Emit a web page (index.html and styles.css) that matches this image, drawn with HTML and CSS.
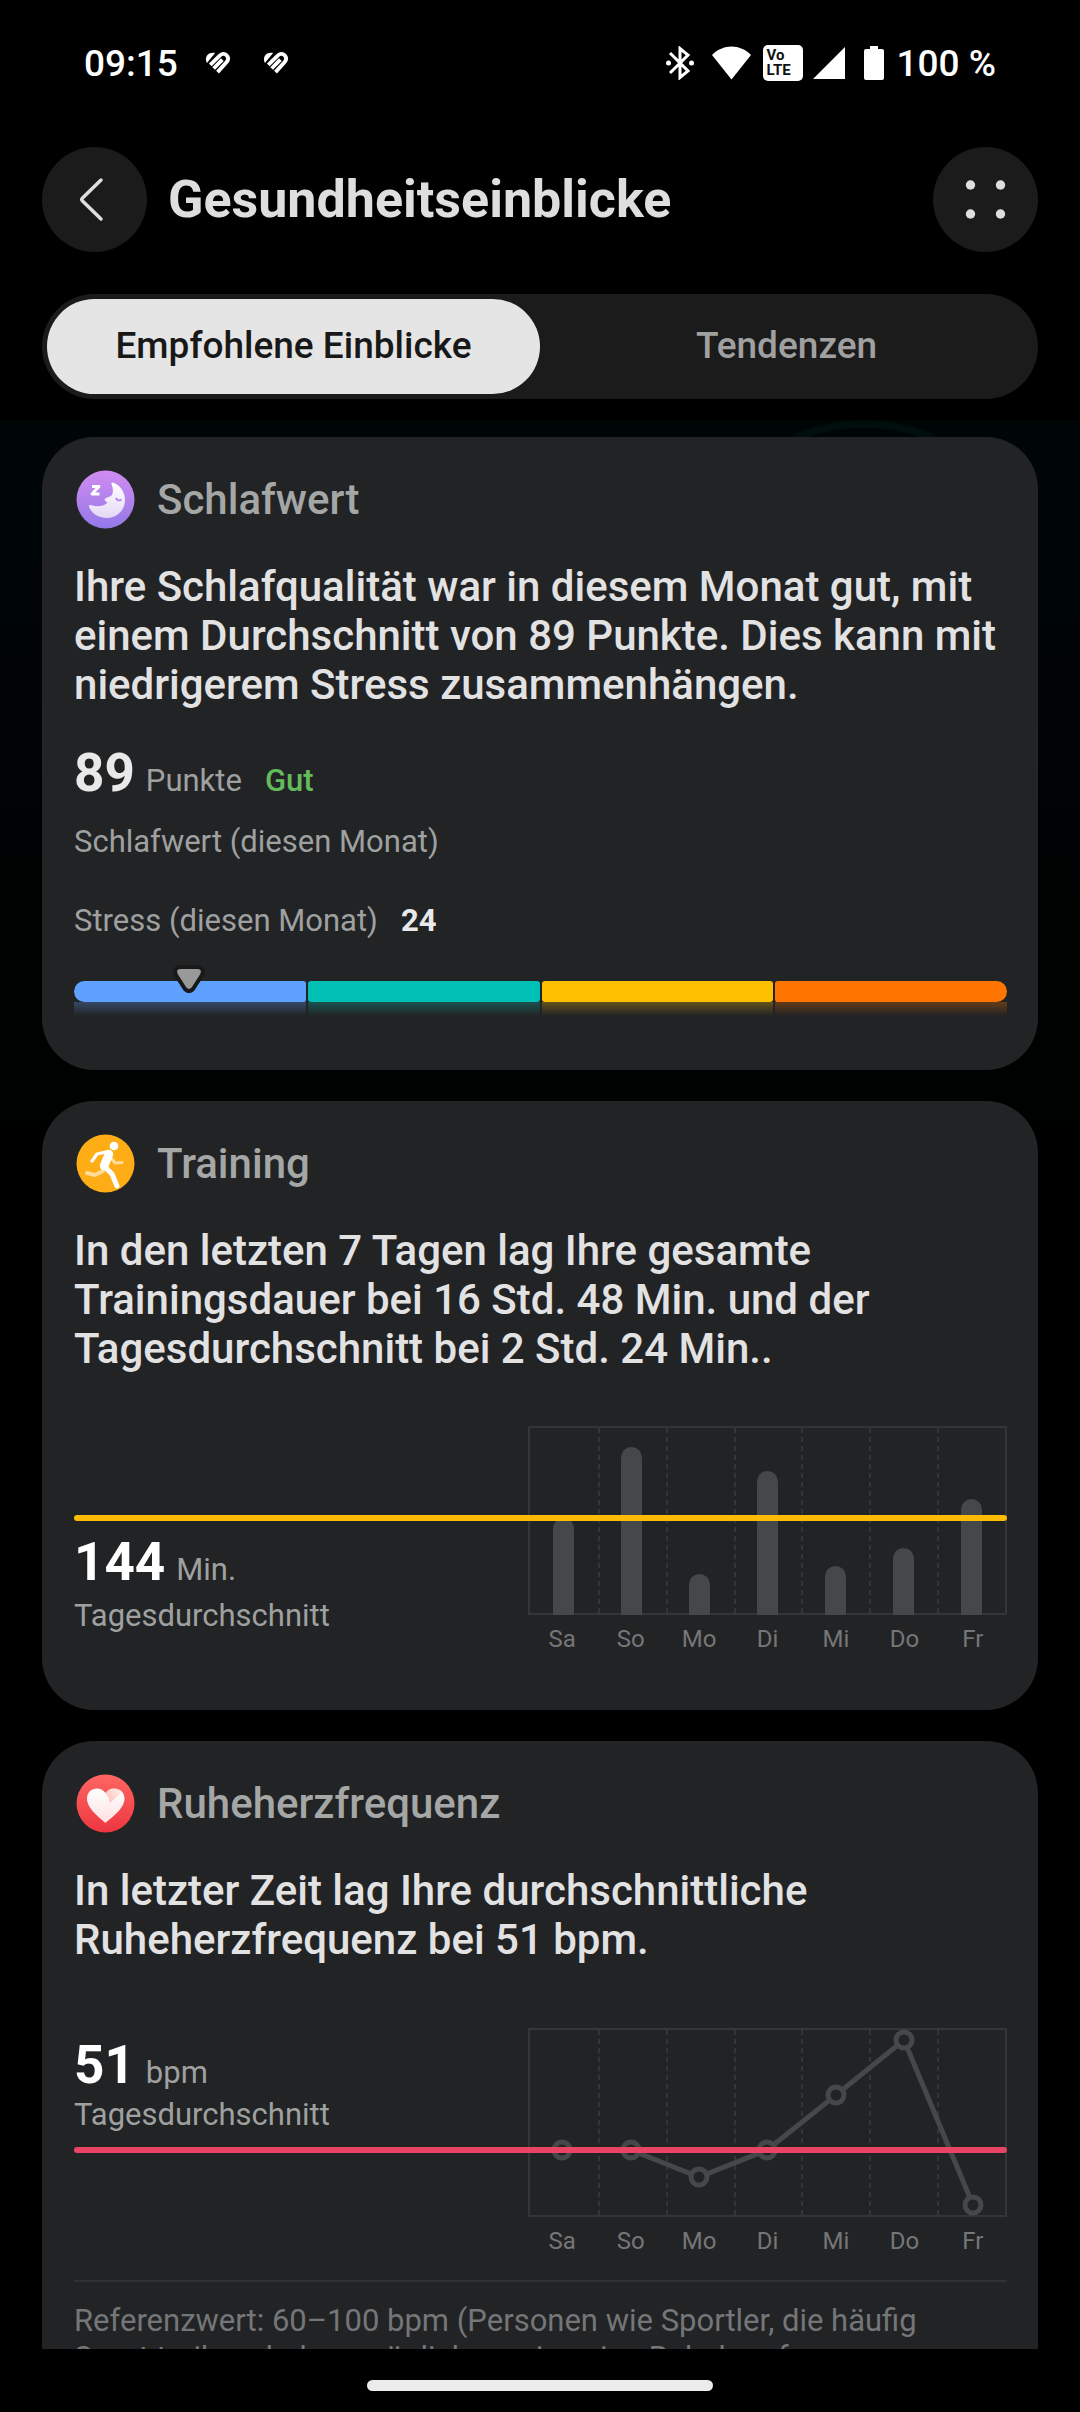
FILE: index.html
```html
<!DOCTYPE html>
<html lang="de">
<head>
<meta charset="utf-8">
<meta name="viewport" content="width=device-width, initial-scale=1">
<title>Gesundheitseinblicke</title>
<link rel="stylesheet" href="styles.css">
</head>
<body>
<div class="status-bar">
  <div class="status-left">
    <span class="clock">09:15</span>
    <svg class="band" viewBox="0 0 27 24" aria-hidden="true"><path d="M2 12 C-1 6 3 0 10.500 1.500 Z" fill="#fff"/><path d="M5.500 14 L15 4.500 C17.500 2 20.500 2 22.500 4 C24.500 6 24.500 8.500 22.500 11 L13 21.500 M9 17.700 L18 8.500" fill="none" stroke="#fff" stroke-width="4"/></svg>
    <svg class="band" viewBox="0 0 27 24" aria-hidden="true"><path d="M2 12 C-1 6 3 0 10.500 1.500 Z" fill="#fff"/><path d="M5.500 14 L15 4.500 C17.500 2 20.500 2 22.500 4 C24.500 6 24.500 8.500 22.500 11 L13 21.500 M9 17.700 L18 8.500" fill="none" stroke="#fff" stroke-width="4"/></svg>
  </div>
  <div class="status-right">
    <svg class="bluetooth" viewBox="0 0 28 34" aria-hidden="true"><path d="M4 7 L22 25 L14 31.500 V2.500 L22 9 L4 27" fill="none" stroke="#fff" stroke-width="3"/><circle cx="2.500" cy="17" r="2.500" fill="#fff"/><circle cx="25.500" cy="17" r="2.500" fill="#fff"/></svg>
    <svg class="wifi" viewBox="0 0 39 34" aria-hidden="true"><path d="M0 9 C11 -2.500 28 -2.500 39 9 L19.500 33.500 Z" fill="#fff"/></svg>
    <span class="volte">Vo<br>LTE</span>
    <svg class="signal" viewBox="0 0 32 32" aria-hidden="true"><path d="M32 0 V32 H0 Z" fill="#fff"/></svg>
    <svg class="battery" viewBox="0 0 20 34" aria-hidden="true"><path d="M6 0 H14 V3 H18 Q20 3 20 5 V32 Q20 34 18 34 H2 Q0 34 0 32 V5 Q0 3 2 3 H6 Z" fill="#fff"/></svg>
    <span class="charge">100 %</span>
  </div>
</div>

<header class="app-bar">
  <button class="round" type="button" aria-label="Zurück"><svg viewBox="0 0 105 105" aria-hidden="true"><path d="M59 33 L40.500 51 Q39 52.500 40.500 54 L59 72" fill="none" stroke="#dedede" stroke-width="3.500" stroke-linecap="round"/></svg></button>
  <h1 class="title">Gesundheitseinblicke</h1>
  <button class="round" type="button" aria-label="Mehr"><svg viewBox="0 0 105 105" aria-hidden="true"><g fill="#dedede"><circle cx="37.500" cy="38" r="4.700"/><circle cx="67.500" cy="38" r="4.700"/><circle cx="37.500" cy="67" r="4.700"/><circle cx="67.500" cy="67" r="4.700"/></g></svg></button>
</header>

<nav class="tabs">
  <button class="tab tab-active" type="button">Empfohlene Einblicke</button>
  <button class="tab" type="button">Tendenzen</button>
</nav>

<main class="feed">
  <section class="card">
    <div class="card-head">
      <svg class="badge" viewBox="0 0 63 63" aria-hidden="true">
        <defs>
          <linearGradient id="sleep" x1="0" y1="0" x2="0" y2="1"><stop offset="0" stop-color="#d08cf0"/><stop offset="1" stop-color="#9478e8"/></linearGradient>
          <linearGradient id="moon" x1="0" y1="0" x2="0" y2="1"><stop offset="0" stop-color="#fff"/><stop offset="1" stop-color="#e4d8f6"/></linearGradient>
        </defs>
        <circle cx="31.500" cy="31.500" r="29" fill="url(#sleep)"/>
        <path d="M38.500 14.500 C46 16.500 51 24 51 32 C51 42 43 50 33 50 C25 50 17.500 46 15 38.500 Q14.500 36.500 17 37 C23 39 29 38.500 32.500 35.500 Q34 34.500 31 32.500 Q29.500 31.500 32 30 L37 28 C40 25 39 20 37.500 16 Q37 14 38.500 14.500 Z" fill="url(#moon)"/>
        <path d="M42 30 Q44 34 47.500 31.500" fill="none" stroke="#b183ec" stroke-width="1.800"/>
        <path d="M18 18.500 H25 L18 26 H25.500" fill="none" stroke="#fff" stroke-width="2.800" stroke-linejoin="round"/>
      </svg>
      <h2 class="card-title">Schlafwert</h2>
    </div>
    <p class="insight">Ihre Schlafqualität war in diesem Monat gut, mit einem Durchschnitt von 89 Punkte. Dies kann mit niedrigerem Stress zusammenhängen.</p>
    <p class="score"><span class="value soft">89</span><span class="unit">Punkte</span><span class="rating">Gut</span></p>
    <p class="caption">Schlafwert (diesen Monat)</p>
    <p class="caption stress">Stress (diesen Monat)<strong class="stress-value">24</strong></p>
    <div class="scale">
      <span class="zone blue"></span><span class="zone teal"></span><span class="zone yellow"></span><span class="zone orange"></span>
      <svg class="marker" viewBox="0 0 32 28" aria-hidden="true"><path d="M7 2 H25 Q32 3 29 10 L20 24 Q16 28 12 24 L3 10 Q0 3 7 2 Z" fill="#999" stroke="#19191a" stroke-width="4"/></svg>
    </div>
  </section>

  <section class="card">
    <div class="card-head">
      <svg class="badge" viewBox="0 0 63 63" aria-hidden="true">
        <circle cx="31.500" cy="31.500" r="29" fill="#ffad17"/>
        <g fill="none" stroke-linecap="round" stroke-linejoin="round">
          <path d="M29 39 L21 43 L13 41" stroke="#ffdb98" stroke-width="4"/>
          <path d="M38 27 L41 31 L48 30.500" stroke="#ffdb98" stroke-width="3.200"/>
          <path d="M32 20 L23 22 L18 29" stroke="#fff" stroke-width="3.200"/>
          <path d="M35 22 L30 34" stroke="#fff" stroke-width="8.500"/>
          <path d="M31 35 L38 42 L43 54" stroke="#fff" stroke-width="5"/>
        </g>
        <circle cx="40" cy="14" r="4.300" fill="#fff"/>
      </svg>
      <h2 class="card-title">Training</h2>
    </div>
    <p class="insight">In den letzten 7 Tagen lag Ihre gesamte Trainingsdauer bei 16 Std. 48 Min. und der Tagesdurchschnitt bei 2 Std. 24 Min..</p>
    <div class="trend">
      <div class="summary below">
        <p class="score-line"><span class="value">144</span><span class="unit">Min.</span></p>
        <p class="caption">Tagesdurchschnitt</p>
      </div>
      <div class="plot bars">
        <div class="slot"><span class="bar" style="height:97px"></span></div>
        <div class="slot"><span class="bar" style="height:168px"></span></div>
        <div class="slot"><span class="bar" style="height:41px"></span></div>
        <div class="slot"><span class="bar" style="height:144px"></span></div>
        <div class="slot"><span class="bar" style="height:49px"></span></div>
        <div class="slot"><span class="bar" style="height:67px"></span></div>
        <div class="slot"><span class="bar" style="height:116px"></span></div>
      </div>
      <div class="days"><span>Sa</span><span>So</span><span>Mo</span><span>Di</span><span>Mi</span><span>Do</span><span>Fr</span></div>
      <div class="average amber" style="margin-top:89px"></div>
    </div>
  </section>

  <section class="card">
    <div class="card-head">
      <svg class="badge" viewBox="0 0 63 63" aria-hidden="true">
        <defs>
          <linearGradient id="pulse" x1="0" y1="0" x2="0" y2="1"><stop offset="0" stop-color="#ff6662"/><stop offset="1" stop-color="#ec3740"/></linearGradient>
          <linearGradient id="heart" x1="0" y1="0" x2="0" y2="1"><stop offset="0" stop-color="#fff"/><stop offset="1" stop-color="#fde0e2"/></linearGradient>
          <linearGradient id="lobe" x1="1" y1="0.300" x2="0" y2="0.700"><stop offset="0" stop-color="#ffc1b8" stop-opacity=".3"/><stop offset="1" stop-color="#ffa9a0" stop-opacity=".7"/></linearGradient>
        </defs>
        <circle cx="31.500" cy="31.500" r="29" fill="url(#pulse)"/>
        <path d="M31.500 51 C26 46 13 37 13 26.500 C13 16 26 13 31.500 21 C37 13 50.500 16 50.500 26.500 C50.500 37 37 46 31.500 51 Z" fill="url(#heart)"/>
        <path d="M31.500 21 C36 14.500 44 15.500 48 20 L36 31 Q35 25 31.500 21 Z" fill="url(#lobe)"/>
      </svg>
      <h2 class="card-title">Ruheherzfrequenz</h2>
    </div>
    <p class="insight">In letzter Zeit lag Ihre durchschnittliche Ruheherzfrequenz bei 51 bpm.</p>
    <div class="trend roomy">
      <div class="summary above">
        <p class="score-line"><span class="value">51</span><span class="unit">bpm</span></p>
        <p class="caption">Tagesdurchschnitt</p>
      </div>
      <div class="plot">
        <div class="slot"></div><div class="slot"></div><div class="slot"></div><div class="slot"></div><div class="slot"></div><div class="slot"></div><div class="slot"></div>
      </div>
      <svg class="curve" viewBox="0 0 479 189" preserveAspectRatio="none" aria-hidden="true">
        <polyline points="34,122 103,122 171,149 239,122 308,67 376,12 445,177" fill="none" stroke="#464749" stroke-width="5"/>
        <g fill="#222325" stroke="#464749" stroke-width="5"><circle cx="34" cy="122" r="8"/><circle cx="103" cy="122" r="8"/><circle cx="171" cy="149" r="8"/><circle cx="239" cy="122" r="8"/><circle cx="308" cy="67" r="8"/><circle cx="376" cy="12" r="8"/><circle cx="445" cy="177" r="8"/></g>
      </svg>
      <div class="days"><span>Sa</span><span>So</span><span>Mo</span><span>Di</span><span>Mi</span><span>Do</span><span>Fr</span></div>
      <div class="average rose" style="margin-top:119px"></div>
    </div>
    <p class="reference">Referenzwert: 60–100 bpm (Personen wie Sportler, die häufig Sport treiben, haben möglicherweise eine Ruheherzfrequenz</p>
  </section>
</main>

<div class="gesture-bar"><span class="handle"></span></div>
</body>
</html>
```

FILE: styles.css
```css
* { box-sizing: border-box; }

body {
  margin: 0;
  height: 100vh;
  display: flex;
  flex-direction: column;
  background: #000;
  color: #e2e2e3;
  font-family: Roboto, "Noto Sans", sans-serif;
}

h1, h2, p { margin: 0; }
svg { display: block; flex: none; }
button { border: 0; padding: 0; font: inherit; cursor: pointer; }

/* status bar */
.status-bar {
  flex: none;
  display: flex;
  align-items: center;
  justify-content: space-between;
  height: 126px;
  padding: 0 84px;
  color: #fff;
  font-size: 37px;
  font-weight: 500;
}
.status-left, .status-right { display: flex; align-items: center; }
.status-left { gap: 32px; }
.clock { margin-right: -5px; }
.band { width: 26px; height: 24px; }
.bluetooth { width: 28px; height: 34px; margin-right: 18px; }
.wifi { width: 39px; height: 34px; margin-right: 12px; }
.volte {
  width: 40px;
  height: 36px;
  margin-right: 10px;
  padding: 3px 0 0 3px;
  border-radius: 5px;
  background: #fff;
  color: #111;
  font-size: 15px;
  line-height: 15px;
  font-weight: 700;
}
.signal { width: 32px; height: 32px; margin-right: 19px; }
.battery { width: 20px; height: 34px; margin-right: 12px; }

/* title row */
.app-bar {
  flex: none;
  display: flex;
  align-items: center;
  gap: 21px;
  padding: 21px 42px 42px;
}
.round {
  flex: none;
  width: 105px;
  height: 105px;
  border-radius: 50%;
  background: #1b1b1b;
}
.round svg { width: 105px; height: 105px; }
.title {
  flex: 1;
  color: #dedede;
  font-size: 52px;
  line-height: 62px;
  font-weight: 700;
}

/* tabs */
.tabs {
  flex: none;
  display: grid;
  grid-template-columns: 1fr 1fr;
  margin: 0 42px 21px;
  padding: 5px;
  border-radius: 53px;
  background: #1b1b1b;
}
.tab {
  height: 95px;
  padding-bottom: 2px;
  border-radius: 48px;
  background: none;
  color: #a0a0a0;
  font-size: 37px;
  font-weight: 500;
}
.tab-active { background: #e5e5e5; color: #181818; }

/* scrolling feed */
.feed {
  flex: 1;
  min-height: 0;
  overflow-y: auto;
  scrollbar-width: none;
  display: flex;
  flex-direction: column;
  gap: 31px;
  padding: 17px 42px 0;
  background:
    radial-gradient(circle at 80% 174px, transparent 166px, #000f0c 167px, #000f0c 173px, transparent 174px) no-repeat,
    linear-gradient(#000606, #000 800px);
}
.card {
  flex: none;
  padding: 31px 31px 54px 32px;
  border-radius: 52px;
  background: #222325;
}
.card-head { display: flex; align-items: center; gap: 20px; }
.badge { width: 63px; height: 63px; }
.card-title {
  color: #a5a6a6;
  font-size: 42px;
  line-height: 49px;
  font-weight: 500;
}
.insight {
  margin-top: 31px;
  font-size: 42px;
  line-height: 49px;
  font-weight: 500;
}

/* figures */
.score, .score-line { display: flex; align-items: baseline; line-height: 37px; }
.score { margin-top: 33px; }
.value { color: #fff; font-size: 53px; line-height: 62px; font-weight: 700; }
.soft { color: #e9e9e9; }
.unit { margin-left: 11px; color: #9fa0a0; font-size: 31px; }
.rating { margin-left: 23px; color: #64bb5c; font-size: 31px; font-weight: 500; }
.caption { color: #9fa0a0; font-size: 31px; line-height: 37px; }
.score + .caption { margin-top: 19px; }
.stress { margin-top: 42px; }
.stress-value { margin-left: 23px; color: #e9e9e9; font-weight: 700; }

/* stress scale */
.scale {
  position: relative;
  display: grid;
  grid-template-columns: repeat(4, 1fr);
  gap: 2px;
  margin-top: 42px;
}
.zone { height: 35px; border-radius: 3px 3px 0 0; }
.zone::before { content: ""; display: block; height: 21px; border-radius: 3px; background: var(--zone); }
.zone::after { content: ""; display: block; height: 14px; background: linear-gradient(var(--zone), transparent); opacity: .3; }
.blue { --zone: #5ea1ff; }
.teal { --zone: #00bfb4; }
.yellow { --zone: #ffc000; }
.orange { --zone: #ff7500; }
.blue::before { border-radius: 11px 3px 3px 11px; }
.orange::before { border-radius: 3px 11px 11px 3px; }
.marker { position: absolute; left: 12%; top: -16px; width: 32px; height: 28px; margin-left: -13px; }

/* weekly trend */
.trend {
  display: grid;
  grid-template-columns: 454fr 479fr;
  grid-template-rows: 189px 41px;
  margin-top: 53px;
}
.roomy { margin-top: 64px; }
.summary { grid-area: 1 / 1 / 3 / 2; }
.below { padding-top: 105px; }
.below .caption { margin-top: 4px; }
.above { padding-top: 6px; }
.plot {
  grid-area: 1 / 2;
  display: grid;
  grid-template-columns: repeat(7, 1fr);
  border: 2px solid #343537;
}
.slot { display: flex; align-items: flex-end; justify-content: center; }
.slot + .slot {
  background: repeating-linear-gradient(#343537 0 5px, transparent 5px 9px) left top / 2px 100% no-repeat;
}
.bars .slot { margin-bottom: -2px; }
.bar { width: 21px; border-radius: 11px 11px 0 0; background: #464749; }
.curve { grid-area: 1 / 2; width: 100%; height: 100%; overflow: visible; }
.days {
  grid-area: 2 / 2;
  display: grid;
  grid-template-columns: repeat(7, 1fr);
  padding-top: 10px;
  color: #757677;
  font-size: 24px;
  line-height: 28px;
  text-align: center;
}
.average { grid-area: 1 / 1 / 2 / 3; height: 6px; border-radius: 3px; }
.amber { background: #fdbc02; }
.rose { background: #ea4464; }

.reference {
  margin-top: 22px;
  padding: 20px 21px 0 0;
  border-top: 2px solid #303133;
  color: #757677;
  font-size: 31px;
  line-height: 37px;
}

/* gesture navigation */
.gesture-bar { flex: none; height: 63px; padding-top: 31px; }
.handle {
  display: block;
  width: 32%;
  height: 11px;
  margin: 0 auto;
  border-radius: 6px;
  background: #ececec;
}
```
